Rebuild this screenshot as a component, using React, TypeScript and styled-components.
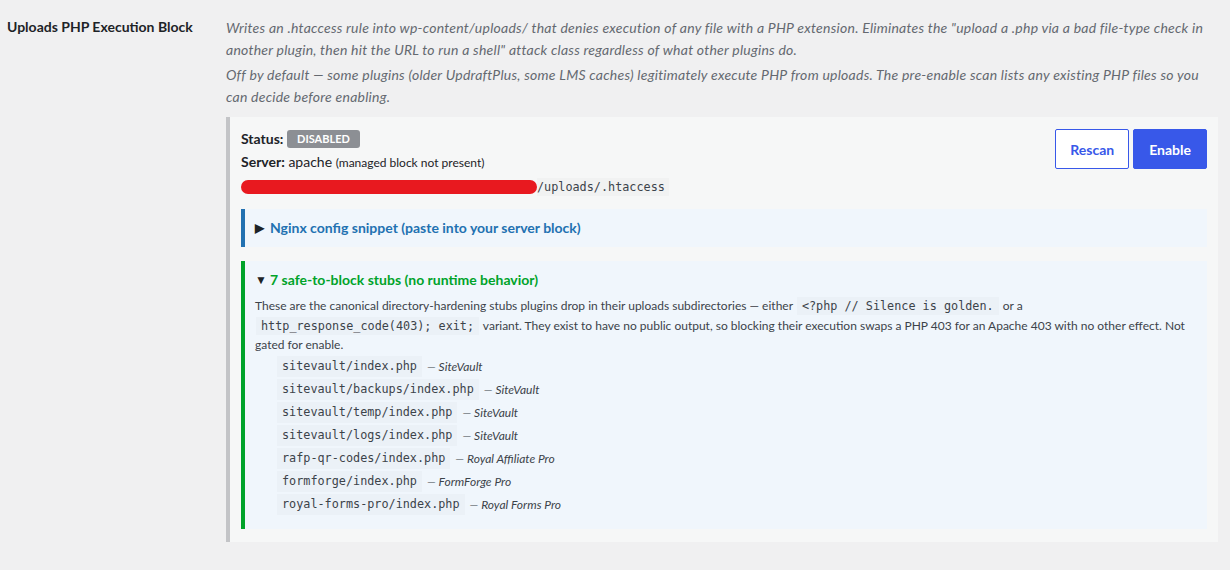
import * as React from 'react'
import styled, { createGlobalStyle } from 'styled-components'

type Stub = {
  path: string
  plugin: string
}

const stubs: Stub[] = [
  { path: 'sitevault/index.php', plugin: 'SiteVault' },
  { path: 'sitevault/backups/index.php', plugin: 'SiteVault' },
  { path: 'sitevault/temp/index.php', plugin: 'SiteVault' },
  { path: 'sitevault/logs/index.php', plugin: 'SiteVault' },
  { path: 'rafp-qr-codes/index.php', plugin: 'Royal Affiliate Pro' },
  { path: 'formforge/index.php', plugin: 'FormForge Pro' },
  { path: 'royal-forms-pro/index.php', plugin: 'Royal Forms Pro' },
]

const App: React.FC = () => {
  return (
    <>
      <GlobalStyle />
      <SettingRow>
        <RowLabel>Uploads PHP Execution Block</RowLabel>
        <RowBody>
          <Description>
            Writes an .htaccess rule into wp-content/uploads/ that denies execution of any file with a PHP
            extension. Eliminates the "upload a .php via a bad file-type check in another plugin, then hit the
            URL to run a shell" attack class regardless of what other plugins do.
          </Description>
          <Description>
            Off by default — some plugins (older UpdraftPlus, some LMS caches) legitimately execute PHP from
            uploads. The pre-enable scan lists any existing PHP files so you can decide before enabling.
          </Description>

          <Panel>
            <PanelHeader>
              <StatusInfo>
                <InfoLine>
                  <Strong>Status:</Strong> <Badge>Disabled</Badge>
                </InfoLine>
                <InfoLine>
                  <Strong>Server:</Strong> apache <Small>(managed block not present)</Small>
                </InfoLine>
                <PathLine>
                  <Redacted />
                  <PathCode>/uploads/.htaccess</PathCode>
                </PathLine>
              </StatusInfo>
              <Actions>
                <Button>Rescan</Button>
                <Button $primary>Enable</Button>
              </Actions>
            </PanelHeader>

            <Disclosure $accent="#2271b1">
              <Summary $accent="#2271b1">
                <Caret>▶</Caret>
                Nginx config snippet (paste into your server block)
              </Summary>
            </Disclosure>

            <Disclosure $accent="#00a32a" $open>
              <Summary $accent="#00a32a">
                <Caret>▼</Caret>
                7 safe-to-block stubs (no runtime behavior)
              </Summary>
              <StubText>
                These are the canonical directory-hardening stubs plugins drop in their uploads subdirectories —
                either <InlineCode>&lt;?php // Silence is golden.</InlineCode> or a{' '}
                <InlineCode>http_response_code(403); exit;</InlineCode> variant. They exist to have no public
                output, so blocking their execution swaps a PHP 403 for an Apache 403 with no other effect. Not
                gated for enable.
              </StubText>
              <StubList>
                {stubs.map((s) => (
                  <StubItem key={s.path}>
                    <InlineCode $block>{s.path}</InlineCode>
                    <PluginName>— {s.plugin}</PluginName>
                  </StubItem>
                ))}
              </StubList>
            </Disclosure>
          </Panel>
        </RowBody>
      </SettingRow>
    </>
  )
}

export default App

const GlobalStyle = createGlobalStyle`
  html, body {
    margin: 0;
    background: #f0f0f1;
    color: #3c434a;
    font-family: Lato, "Liberation Sans", sans-serif;
    font-size: 14px;
  }
`

const SettingRow = styled.div`
  display: grid;
  grid-template-columns: 219px 1fr;
  padding: 15px 12px 29px 7px;
`

const RowLabel = styled.div`
  font-weight: 700;
  font-size: 14px;
  line-height: 21px;
  color: #1d2327;
  padding-top: 1px;
`

const RowBody = styled.div`
  display: flex;
  flex-direction: column;
`

const Description = styled.p`
  margin: 2px 0 2px;
  font-style: italic;
  font-size: 14px;
  letter-spacing: 0.24px;
  line-height: 21.5px;
  color: #646970;
`

const Panel = styled.div`
  margin-top: 8px;
  background: #f6f7f7;
  border-left: 4px solid #c3c4c7;
  padding: 12px 11px 13px 11px;
  display: flex;
  flex-direction: column;
  gap: 14px;
`

const PanelHeader = styled.div`
  display: flex;
  justify-content: space-between;
  align-items: flex-start;
  margin-bottom: -3px;
`

const StatusInfo = styled.div`
  display: flex;
  flex-direction: column;
  gap: 3px;
`

const InfoLine = styled.div`
  font-size: 14px;
  line-height: 20px;
  color: #1d2327;
`

const Strong = styled.span`
  font-weight: 700;
`

const Small = styled.span`
  font-size: 12px;
`

const Badge = styled.span`
  display: inline-block;
  background: #8c8f94;
  color: #fff;
  font-size: 11px;
  font-weight: 700;
  text-transform: uppercase;
  line-height: 18px;
  padding: 0 10px;
  border-radius: 3px;
  vertical-align: 1px;
`

const PathLine = styled.div`
  display: flex;
  align-items: center;
  height: 22px;
`

const Redacted = styled.span`
  display: inline-block;
  width: 296px;
  height: 14px;
  background: #e8191f;
  border-radius: 7px;
`

const PathCode = styled.code`
  font-family: "DejaVu Sans Mono", "Liberation Mono", monospace;
  font-size: 11.8px;
  line-height: 18px;
  color: #3c434a;
  background: rgba(0, 0, 0, 0.02);
  padding: 0 4px 0 0;
`

const Actions = styled.div`
  display: flex;
  gap: 4px;
`

const Button = styled.button<{ $primary?: boolean }>`
  height: 40px;
  padding: 0 ${(p) => (p.$primary ? 15 : 14)}px;
  font-family: inherit;
  font-size: 14px;
  font-weight: 700;
  border-radius: 2px;
  border: 1px solid #3858e9;
  background: ${(p) => (p.$primary ? '#3858e9' : '#ffffff')};
  color: ${(p) => (p.$primary ? '#ffffff' : '#3858e9')};
  cursor: pointer;
`

const Disclosure = styled.div<{ $accent: string; $open?: boolean }>`
  background: #f0f6fc;
  border-left: 4px solid ${(p) => p.$accent};
  padding: 9px 15px ${(p) => (p.$open ? 13 : 9)}px 10px;
`

const Summary = styled.div<{ $accent: string }>`
  display: flex;
  align-items: center;
  font-size: 14px;
  font-weight: 700;
  line-height: 20px;
  color: ${(p) => p.$accent};
`

const Caret = styled.span`
  font-size: 12px;
  color: #1d2327;
  width: 15px;
`

const StubText = styled.p`
  margin: 6px 0 0;
  font-size: 12px;
  line-height: 19.5px;
  color: #3c434a;
`

const InlineCode = styled.code<{ $block?: boolean }>`
  display: ${(p) => (p.$block ? 'inline-block' : 'inline')};
  line-height: ${(p) => (p.$block ? '21px' : '1')};
  font-family: "DejaVu Sans Mono", "Liberation Mono", monospace;
  font-size: 11.8px;
  color: #3c434a;
  background: rgba(0, 0, 0, 0.02);
  padding: ${(p) => (p.$block ? '0 5px' : '2px 5px')};
  margin: 0 1px;
`

const StubList = styled.ul`
  list-style: none;
  margin: 0;
  padding: 0 0 0 21px;
  display: flex;
  flex-direction: column;
`

const StubItem = styled.li`
  display: flex;
  align-items: center;
  height: 23px;
  font-size: 12px;
`

const PluginName = styled.em`
  margin-left: 4px;
  font-size: 12px;
  color: #3c434a;
`
